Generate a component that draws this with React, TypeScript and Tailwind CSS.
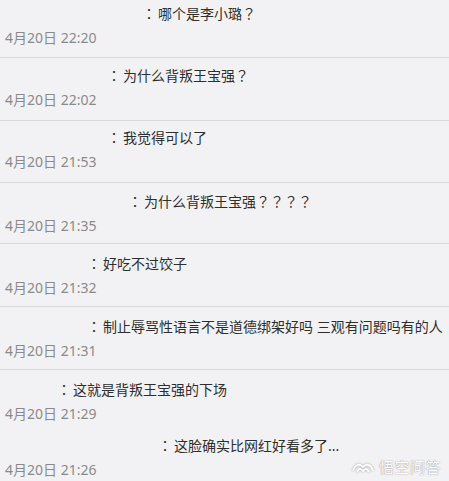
import React from 'react';

interface Reply {
  text: string;
  time: string;
  indent: string;
  pad: string;
  divider: boolean;
}

const replies: Reply[] = [
  { text: '：哪个是李小璐？', time: '4月20日 22:20', indent: 'pl-[142px]', pad: 'pt-[3px] pb-[9px]', divider: true },
  { text: '：为什么背叛王宝强？', time: '4月20日 22:02', indent: 'pl-[107px]', pad: 'pt-[7px] pb-[10px]', divider: true },
  { text: '：我觉得可以了', time: '4月20日 21:53', indent: 'pl-[107px]', pad: 'pt-[6px] pb-[10px]', divider: true },
  { text: '：为什么背叛王宝强？？？？', time: '4月20日 21:35', indent: 'pl-[128px]', pad: 'pt-[8px] pb-[7px]', divider: true },
  { text: '：好吃不过饺子', time: '4月20日 21:32', indent: 'pl-[87px]', pad: 'pt-[9px] pb-[8px]', divider: true },
  { text: '：制止辱骂性语言不是道德绑架好吗 三观有问题吗有的人', time: '4月20日 21:31', indent: 'pl-[87px]', pad: 'pt-[9px] pb-[8px]', divider: true },
  { text: '：这就是背叛王宝强的下场', time: '4月20日 21:29', indent: 'pl-[57px]', pad: 'pt-[9px] pb-[0px]', divider: false },
  { text: '：这脸确实比网红好看多了...', time: '4月20日 21:26', indent: 'pl-[158px]', pad: 'pt-[11px] pb-[4px]', divider: false },
];

// full-width colon / question mark sit centred in their box, like the original font
const renderText = (text: string) =>
  text.split(/([：？])/).map((part, i) =>
    part === '：' ? (
      <span key={i} className="pr-[2px] font-['Noto_Sans_CJK_JP',sans-serif]">
        {part}
      </span>
    ) : part === '？' ? (
      <span key={i} className="font-['Noto_Sans_CJK_JP',sans-serif]">
        {part}
      </span>
    ) : (
      <React.Fragment key={i}>{part}</React.Fragment>
    )
  );

function Watermark() {
  return (
    <div className="absolute right-[8px] bottom-[5px] flex items-center gap-[4px]">
      <svg
        width="24"
        height="14"
        viewBox="0 0 24 14"
        fill="none"
        stroke="#ffffff"
        strokeWidth="1.8"
        className="[filter:drop-shadow(0_0_1px_rgba(0,0,0,0.35))]"
      >
        <path d="M2 11 C4 4, 9 3, 12 7 C15 3, 20 4, 22 11" />
        <path d="M6 12 C8 8, 10 8, 12 11 C14 8, 16 8, 18 12" />
      </svg>
      <span className="text-[15px] leading-[18px] text-white tracking-[0.5px] [text-shadow:0_0_1px_rgba(0,0,0,0.45),0_0_2px_rgba(0,0,0,0.15)]">
        悟空问答
      </span>
    </div>
  );
}

export default function App() {
  return (
    <div className="relative w-[449px] h-[481px] overflow-hidden bg-[#f2f2f4] font-['Noto_Sans','Noto_Sans_CJK_SC',sans-serif]">
      {replies.map((r, i) => (
        <div
          key={i}
          className={`${r.pad} ${r.divider ? 'border-b border-[#d9d9db]' : ''}`}
        >
          <div className={`${r.indent} h-[20px] text-[14px] leading-[20px] text-[#2e2e2e] whitespace-nowrap overflow-hidden`}>
            {renderText(r.text)}
          </div>
          <div className="mt-[5px] pl-[5px] h-[20px] text-[14px] leading-[20px] text-[#8a8a8a] whitespace-nowrap">
            {r.time}
          </div>
        </div>
      ))}
      <Watermark />
    </div>
  );
}
